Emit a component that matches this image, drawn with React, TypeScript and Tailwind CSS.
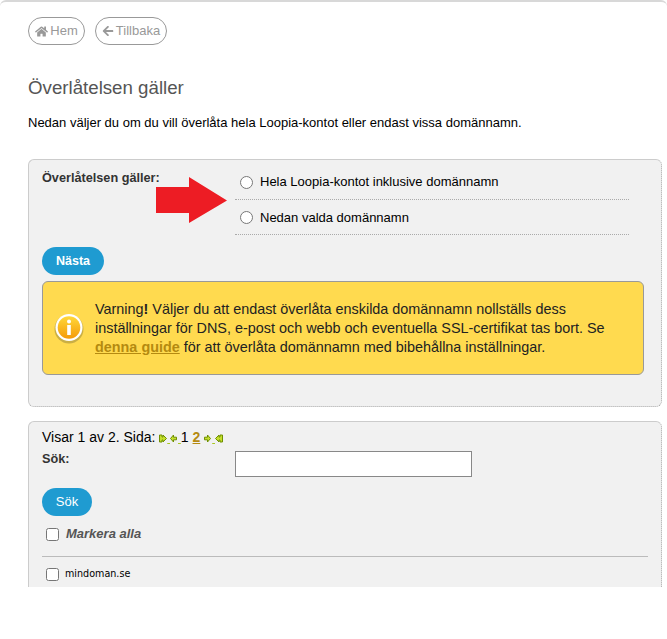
import { FaArrowLeft, FaHome } from 'react-icons/fa';

const PagerIcon = ({ kind }: { kind: 'first' | 'prev' | 'next' | 'last' }) => {
  const paths = {
    first: 'M0.5 1h2.5v2l1-0V1l3.500 3.500L4 8V6H3v2H0.500z',
    prev: 'M3.500 1v2.200h3v2.600h-3V8L0.500 4.500z',
    next: 'M3.500 1v2.200h-3v2.600h3V8l3-3.500z',
    last: 'M7.500 1H5v2H4V1L0.500 4.500 4 8V6h1v2h2.500z',
  };
  return (
    <svg width="8" height="9" viewBox="0 0 8 9" className="inline-block align-[-1px]">
      <path d={paths[kind]} fill="#c4de2c" stroke="#6f8f00" strokeWidth="1" />
    </svg>
  );
};

const InfoIcon = () => (
  <svg width="30" height="31" viewBox="0 0 30 31" className="shrink-0">
    <defs>
      <linearGradient id="info" x1="0" y1="0" x2="0" y2="1">
        <stop offset="0" stopColor="#ffd83a" />
        <stop offset="1" stopColor="#f59a08" />
      </linearGradient>
    </defs>
    <circle cx="15" cy="16" r="14.500" fill="#8a7a3a" opacity="0.45" />
    <circle cx="15" cy="14.500" r="13.500" fill="#fff" />
    <circle cx="15" cy="14.500" r="11.300" fill="url(#info)" />
    <circle cx="15" cy="8.500" r="2" fill="#fff" />
    <rect x="13.200" y="12" width="3.600" height="10" fill="#fff" />
  </svg>
);

const Arrow = () => (
  <svg width="72" height="47" viewBox="0 0 72 47" className="absolute left-[127px] top-[17px]">
    <path d="M0 10h33V0l38 23.500L33 46V36H0z" fill="#ed1c24" />
  </svg>
);

export default function App() {
  return (
    <div className="h-[639px] overflow-hidden rounded-t-[6px] border-t-2 border-[#d8d8d8] bg-white pl-[28px] pr-[5px] font-['Liberation_Sans',Arial,sans-serif] text-[13px] text-black">
      <div className="flex gap-[10px] pt-[15px]">
        <a className="flex h-[28px] w-[57px] items-center justify-center gap-[2px] rounded-full border border-[#999] text-[13px] text-[#999]">
          <FaHome className="text-[13px]" />
          Hem
        </a>
        <a className="flex h-[28px] w-[72px] items-center justify-center gap-[2px] rounded-full border border-[#999] text-[13px] text-[#999]">
          <FaArrowLeft className="text-[12px]" />
          Tillbaka
        </a>
      </div>

      <h1 className="mt-[32px] text-[18.700px] leading-[21px] text-[#555]">Överlåtelsen gäller</h1>
      <p className="mt-[18px] leading-[14px]">
        Nedan väljer du om du vill överlåta hela Loopia-kontot eller endast vissa domännamn.
      </p>

      <section className="relative mt-[29px] h-[248px] rounded-[6px] border border-dotted border-[#aaa] border-t-[#ccc] border-l-[#ccc] bg-[#f1f1f1] px-[13px] [border-left-style:solid] [border-top-style:solid]">
        <Arrow />
        <div className="flex">
          <label className="w-[193px] pt-[11px] text-[12.700px] leading-[14px] font-bold text-[#333]">
            Överlåtelsen gäller:
          </label>
          <div className="w-[394px]">
            <label className="flex h-[40px] items-center gap-[7px] border-b border-dotted border-[#aaa] pl-[5px] pt-[5px]">
              <input type="radio" name="scope" className="m-0" />
              Hela Loopia-kontot inklusive domännamn
            </label>
            <label className="flex h-[35px] items-center gap-[7px] border-b border-dotted border-[#aaa] pl-[5px] pt-[1px]">
              <input type="radio" name="scope" className="m-0" />
              Nedan valda domännamn
            </label>
          </div>
        </div>
        <button className="mt-[12px] block h-[28px] w-[62px] rounded-full bg-[#1f9bd1] text-[12.500px] font-bold text-white">
          Nästa
        </button>
        <div className="mt-[6px] flex h-[94px] w-[602px] items-center gap-[11px] rounded-[6px] border border-[#999] bg-[#ffda4f] pl-[11px] pr-[12px] text-[14.400px] leading-[19px] text-[#222]">
          <InfoIcon />
          <p>
            Varning<b>!</b> Väljer du att endast överlåta enskilda domännamn nollställs dess inställningar för DNS, e-post och webb och eventuella SSL-certifikat tas bort. Se{' '}
            <a className="font-bold text-[#b58a10] underline">denna guide</a> för att överlåta domännamn med bibehållna inställningar.
          </p>
        </div>
      </section>

      <section className="mt-[14px] h-[166px] overflow-hidden rounded-t-[6px] border-t border-r border-l border-t-[#ccc] border-r-[#aaa] border-l-[#ccc] bg-[#f1f1f1] pl-[13px] pr-[12px] [border-right-style:dotted]">
        <div className="pt-[7px] text-[14px] leading-[16px]">
          Visar 1 av 2. Sida: <PagerIcon kind="first" />
          <span className="text-[10px] text-[#a8c820] underline"> </span>
          <PagerIcon kind="prev" />
          <span className="text-[10px] text-[#a8c820] underline"> </span>1{' '}
          <a className="font-bold text-[#b58a10] underline">2</a> <PagerIcon kind="next" />
          <span className="text-[10px] text-[#a8c820] underline"> </span>
          <PagerIcon kind="last" />
        </div>
        <div className="flex">
          <label className="w-[193px] pt-[5px] text-[12.700px] leading-[14px] font-bold text-[#333]">Sök:</label>
          <input type="text" className="mt-[4px] h-[26px] w-[237px] border border-[#888] bg-white" />
        </div>
        <button className="mt-[11px] block h-[28px] w-[50px] rounded-full bg-[#1f9bd1] text-[13px] text-white">
          Sök
        </button>
        <label className="mt-[10px] flex h-[16px] items-center gap-[7px] pl-[4px] text-[13px] font-bold text-[#555] italic">
          <input type="checkbox" className="m-0" />
          Markera alla
        </label>
        <div className="mt-[14px] h-px w-[606px] bg-[#bbb]" />
        <label className="mt-[10px] flex items-center gap-[6px] pl-[4px] font-['DejaVu_Sans',sans-serif] text-[9.600px]">
          <input type="checkbox" className="m-0" />
          mindoman.se
        </label>
      </section>
    </div>
  );
}
